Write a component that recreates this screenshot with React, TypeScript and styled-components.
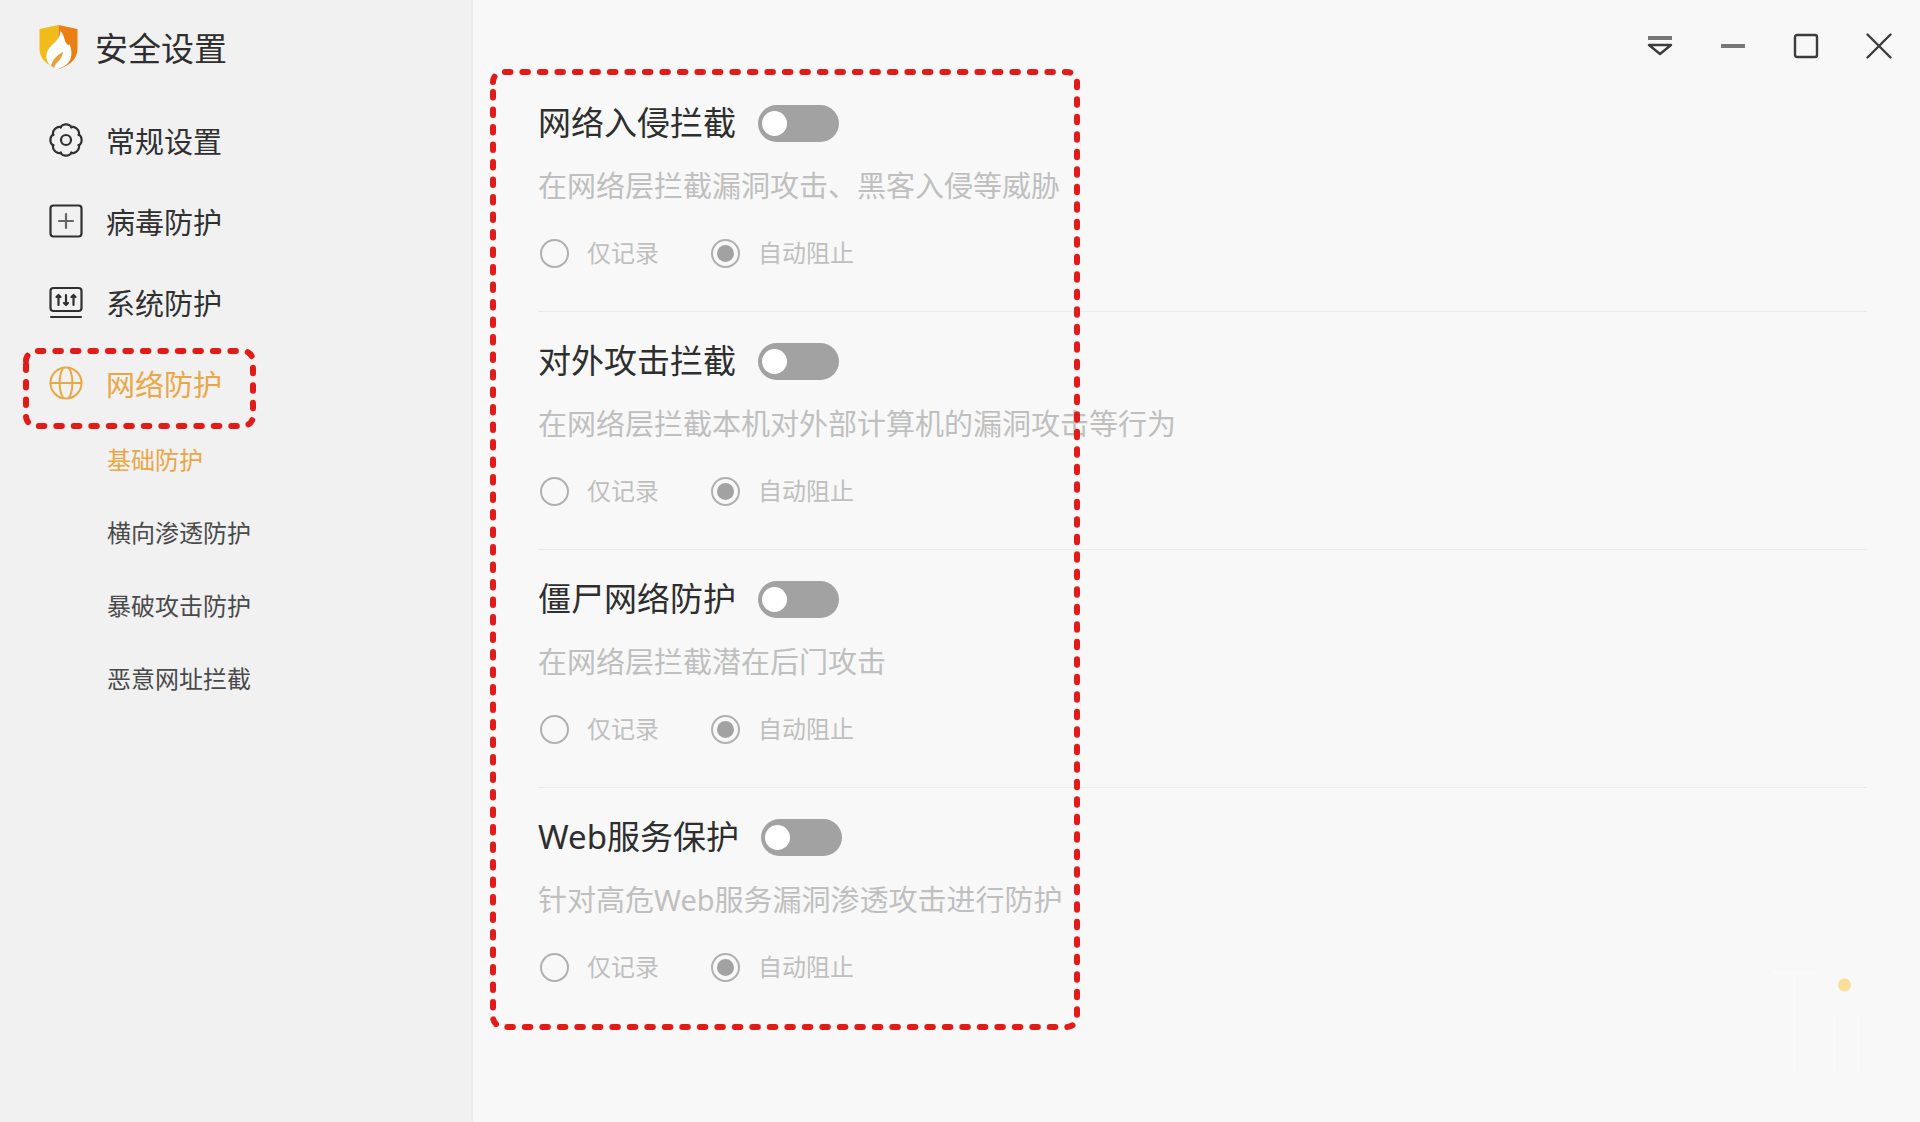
import React, { useId } from "react";
import styled, { createGlobalStyle } from "styled-components";

const GlobalStyle = createGlobalStyle`
  *, *::before, *::after { box-sizing: border-box; }
  body {
    margin: 0;
    background: #f8f8f8;
    font-family: "Noto Sans", "Noto Sans CJK SC", sans-serif;
  }
`;

const Window = styled.div`
  position: relative;
  display: flex;
  min-height: 100vh;
  background: #f8f8f8;
`;

const Sidebar = styled.aside`
  flex: 0 0 473px;
  background: #f1f1f1;
  border-right: 2px solid #ececec;
`;

const Brand = styled.header`
  display: flex;
  align-items: center;
  gap: 16px;
  height: 101px;
  padding: 0 0 8px 38px;
`;

const BrandTitle = styled.h1`
  margin: 0;
  padding-top: 4px;
  font-size: 33px;
  line-height: 42px;
  font-weight: 400;
  color: #2e2e2e;
`;

const NavList = styled.ul`
  list-style: none;
  margin: 0;
  padding: 0;
`;

const NavItem = styled.li`
  position: relative;
`;

const NavLink = styled.a<{ $active?: boolean }>`
  display: flex;
  align-items: center;
  gap: 23px;
  height: 81px;
  padding-left: 49px;
  font-size: 29px;
  line-height: 40px;
  text-decoration: none;
  color: ${(p) => (p.$active ? "#eba743" : "#303030")};
  svg { flex: none; margin-bottom: 4px; }
`;

const SubLink = styled.a<{ $active?: boolean }>`
  display: flex;
  align-items: center;
  height: 73px;
  padding: 0 0 4px 107px;
  font-size: 24px;
  line-height: 32px;
  text-decoration: none;
  color: ${(p) => (p.$active ? "#eba743" : "#4a4a4a")};
`;

const Main = styled.main`
  position: relative;
  flex: 1;
  min-width: 0;
`;

const TitleBar = styled.div`
  display: flex;
  justify-content: flex-end;
  height: 74px;
  padding: 17px 5px 0 0;
`;

const WindowButton = styled.button`
  display: grid;
  place-items: center;
  width: 73px;
  height: 57px;
  padding: 0;
  border: 0;
  background: none;
  color: #3c3c3c;
`;

const Sections = styled.div`
  padding: 0 53px 0 65px;
`;

const Section = styled.section`
  display: flex;
  flex-direction: column;
  height: 238px;
  padding-top: 28px;
  border-bottom: 1px solid #ebebeb;
  &:last-child { border-bottom-color: transparent; }
`;

const SectionHead = styled.div`
  display: flex;
  align-items: center;
  gap: 22px;
  height: 42px;
`;

const SectionTitle = styled.label`
  font-size: 33px;
  line-height: 42px;
  color: #2e2e2e;
`;

const Switch = styled.input`
  appearance: none;
  width: 81px;
  height: 37px;
  margin: 0;
  padding: 6px 4px;
  border-radius: 19px;
  background: #a2a2a2;
  &::before {
    content: "";
    display: block;
    width: 25px;
    height: 25px;
    border-radius: 50%;
    background: #fff;
  }
  &:checked { background: #eba743; }
  &:checked::before { margin-left: auto; }
`;

const Description = styled.p`
  margin: 22px 0 0;
  font-size: 29px;
  line-height: 40px;
  color: #bfbfbf;
`;

const Choices = styled.div`
  display: flex;
  align-items: center;
  gap: 52px;
  margin-top: 32px;
  padding-left: 2px;
`;

const Choice = styled.label`
  display: flex;
  align-items: center;
  gap: 18px;
  font-size: 24px;
  line-height: 30px;
  color: #bfbfbf;
`;

const Radio = styled.input`
  appearance: none;
  display: grid;
  place-items: center;
  width: 29px;
  height: 29px;
  margin: 0;
  border: 2px solid #b0b0b0;
  border-radius: 50%;
  &:checked::before {
    content: "";
    width: 17px;
    height: 17px;
    border-radius: 50%;
    background: #a2a2a2;
  }
`;

const OutlineSvg = styled.svg<{ $left: number; $top: number }>`
  position: absolute;
  left: ${(p) => p.$left}px;
  top: ${(p) => p.$top}px;
  pointer-events: none;
`;

const Glow = styled.svg`
  position: absolute;
  right: 20px;
  bottom: 20px;
  pointer-events: none;
`;

type OutlineProps = { left: number; top: number; width: number; height: number };

function DashedOutline({ left, top, width, height }: OutlineProps) {
  const r = 10;
  const x = 3, y = 3, x2 = x + width, y2 = y + height;
  const d = `M${x} ${y + r}A${r} ${r} 0 0 1 ${x + r} ${y}H${x2 - r}A${r} ${r} 0 0 1 ${x2} ${y + r}V${y2 - r}A${r} ${r} 0 0 1 ${x2 - r} ${y2}H${x + r}A${r} ${r} 0 0 1 ${x} ${y2 - r}V${y + r}`;
  return (
    <OutlineSvg $left={left} $top={top} width={width + 6} height={height + 6} aria-hidden="true">
      <path d={d} fill="none" stroke="#e31b18" strokeWidth="6" strokeLinecap="round" strokeDasharray="5.5 12" />
    </OutlineSvg>
  );
}

const Logo = () => (
  <svg width="41" height="46" viewBox="0 0 41 46" aria-hidden="true">
    <path d="M20.500 1L1.500 5V25C1.500 35 10 42 20.500 45Z" fill="#f0bc1c" />
    <path d="M20.500 1L39.500 5V25C39.500 35 31 42 20.500 45Z" fill="#ea7f14" />
    <path d="M22.500 7C27 12 26 17 29 20C30 22 31 21 31.500 20C34.500 27 34 35 30 39C26 43 21 45 18 45L14 43C8 39 7 31 10 26C14 19 22 17 22.500 7Z" fill="#fff" />
    <path d="M25 28C21 30 15 34 13 42L16 44C17 39 24 36 25 28Z" fill="#e9a03a" />
  </svg>
);

const stroke = { fill: "none", stroke: "currentColor", strokeLinecap: "round", strokeLinejoin: "round" } as const;

const gearPath = (() => {
  const points: string[] = [];
  for (let i = 0; i <= 128; i++) {
    const a = (i / 128) * Math.PI * 2;
    const radius = 13.5 + 2.1 * Math.sqrt(Math.abs(Math.cos(a * 4)));
    points.push(`${(17 + radius * Math.sin(a)).toFixed(2)} ${(17 - radius * Math.cos(a)).toFixed(2)}`);
  }
  return `M${points.join("L")}Z`;
})();

const GearIcon = () => (
  <svg width="34" height="34" viewBox="0 0 34 34" aria-hidden="true" {...stroke} strokeWidth="2.2">
    <path d={gearPath} />
    <circle cx="17" cy="17" r="5" />
  </svg>
);

const PlusIcon = () => (
  <svg width="34" height="34" viewBox="0 0 34 34" aria-hidden="true" {...stroke} strokeWidth="2.2">
    <rect x="1.500" y="1.500" width="31" height="31" rx="3" />
    <path d="M17 10V24M10 17H24" stroke="#666" />
  </svg>
);

const SystemIcon = () => (
  <svg width="34" height="34" viewBox="0 0 34 34" aria-hidden="true" {...stroke} strokeWidth="2.2">
    <rect x="1.500" y="3" width="31" height="23" rx="3" />
    <path d="M2 32H32" />
    <path d="M9.500 11V20M7.500 12L9.500 10L11.500 12M17 10V20M15 18L17 20L19 18M24.500 11V20M22.500 12L24.500 10L26.500 12" />
  </svg>
);

const GlobeIcon = () => (
  <svg width="34" height="34" viewBox="0 0 34 34" aria-hidden="true" {...stroke} strokeWidth="2">
    <circle cx="17" cy="17" r="15.500" />
    <path d="M1.500 17H32.500" />
    <path d="M14 2C9.500 10 9.500 24 14 32M20 2C24.500 10 24.500 24 20 32" />
  </svg>
);

const nav = [
  { label: "常规设置", Icon: GearIcon },
  { label: "病毒防护", Icon: PlusIcon },
  { label: "系统防护", Icon: SystemIcon },
  { label: "网络防护", Icon: GlobeIcon, active: true },
];

const subNav = ["基础防护", "横向渗透防护", "暴破攻击防护", "恶意网址拦截"];

const protections = [
  { title: "网络入侵拦截", text: "在网络层拦截漏洞攻击、黑客入侵等威胁" },
  { title: "对外攻击拦截", text: "在网络层拦截本机对外部计算机的漏洞攻击等行为" },
  { title: "僵尸网络防护", text: "在网络层拦截潜在后门攻击" },
  { title: "Web服务保护", text: "针对高危Web服务漏洞渗透攻击进行防护" },
];

function Protection({ title, text }: { title: string; text: string }) {
  const id = useId();
  return (
    <Section>
      <SectionHead>
        <SectionTitle htmlFor={id}>{title}</SectionTitle>
        <Switch id={id} type="checkbox" role="switch" />
      </SectionHead>
      <Description>{text}</Description>
      <Choices>
        <Choice><Radio type="radio" name={id + "mode"} />仅记录</Choice>
        <Choice><Radio type="radio" name={id + "mode"} defaultChecked />自动阻止</Choice>
      </Choices>
    </Section>
  );
}

export default function App() {
  return (
    <>
      <GlobalStyle />
      <Window>
        <Sidebar>
          <Brand>
            <Logo />
            <BrandTitle>安全设置</BrandTitle>
          </Brand>
          <nav>
            <NavList>
              {nav.map(({ label, Icon, active }) => (
                <NavItem key={label}>
                  <NavLink href="#" $active={active}><Icon />{label}</NavLink>
                  {active && <DashedOutline left={23} top={4} width={227} height={75} />}
                  {active && (
                    <NavList>
                      {subNav.map((name, i) => (
                        <li key={name}><SubLink href="#" $active={i === 0}>{name}</SubLink></li>
                      ))}
                    </NavList>
                  )}
                </NavItem>
              ))}
            </NavList>
          </nav>
        </Sidebar>
        <Main>
          <TitleBar>
            <WindowButton aria-label="菜单">
              <svg width="26" height="26" viewBox="0 0 26 26" {...stroke} strokeWidth="2.400">
                <path d="M1 5H25" strokeWidth="4" strokeLinecap="butt" stroke="#777" />
                <path d="M2 12H24L13 21Z" />
              </svg>
            </WindowButton>
            <WindowButton aria-label="最小化">
              <svg width="26" height="26" viewBox="0 0 26 26" {...stroke} strokeWidth="4">
                <path d="M1 13H25" strokeLinecap="butt" stroke="#777" />
              </svg>
            </WindowButton>
            <WindowButton aria-label="最大化">
              <svg width="26" height="26" viewBox="0 0 26 26" {...stroke} strokeWidth="2.400">
                <rect x="2" y="2" width="22" height="22" rx="2" />
              </svg>
            </WindowButton>
            <WindowButton aria-label="关闭">
              <svg width="26" height="26" viewBox="0 0 26 26" {...stroke} strokeWidth="2.400">
                <path d="M1.500 1.500L24.500 24.500M24.500 1.500L1.500 24.500" />
              </svg>
            </WindowButton>
          </TitleBar>
          <Sections>
            {protections.map((p) => <Protection key={p.title} {...p} />)}
          </Sections>
          <DashedOutline left={17} top={69} width={584} height={955} />
        </Main>
        <Glow width="140" height="150" viewBox="0 0 140 150" aria-hidden="true">
          <path d="M12 21H56M34 21V120M74 64V120M98 64V120" stroke="#fafafa" strokeWidth="3" fill="none" />
          <circle cx="84.500" cy="33" r="6.500" fill="#fbdd9a" />
        </Glow>
      </Window>
    </>
  );
}
